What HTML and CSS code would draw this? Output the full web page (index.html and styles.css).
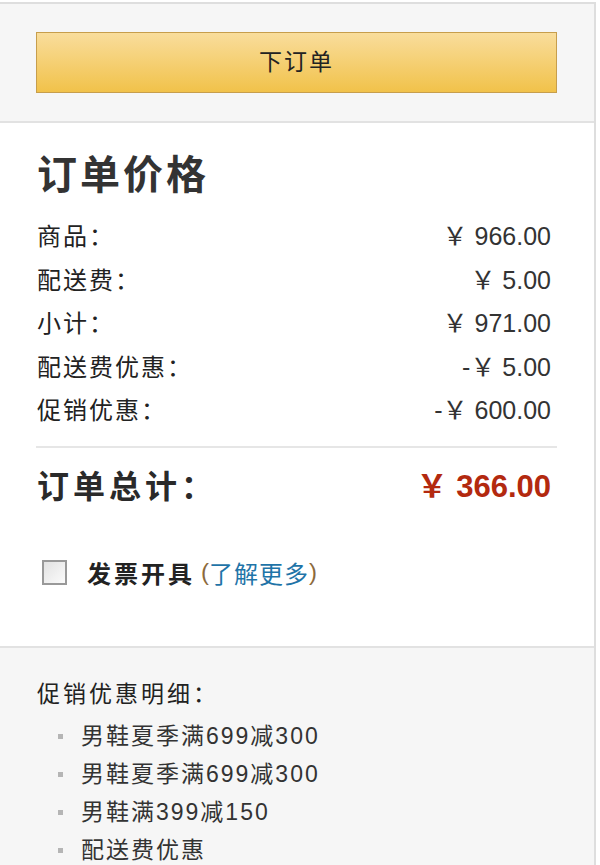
FILE: index.html
```html
<!DOCTYPE html>
<html lang="zh-CN">
<head>
<meta charset="utf-8">
<title>订单价格</title>
<link rel="stylesheet" href="styles.css">
</head>
<body>
<div class="checkout">
    <div class="submit_box">
        <a class="btn_order" href="javascript:;">下订单</a>
    </div>

    <div class="price_box">
        <h2 class="title">订单价格</h2>
        <ul class="price_list">
            <li><span class="label">商品：</span><span class="num">￥ 966.00</span></li>
            <li><span class="label">配送费：</span><span class="num">￥ 5.00</span></li>
            <li><span class="label">小计：</span><span class="num">￥ 971.00</span></li>
            <li><span class="label">配送费优惠：</span><span class="num">-￥ 5.00</span></li>
            <li><span class="label">促销优惠：</span><span class="num">-￥ 600.00</span></li>
        </ul>
        <div class="total">
            <span class="label">订单总计：</span>
            <span class="num">￥ 366.00</span>
        </div>
        <label class="invoice">
            <input type="checkbox">
            <span class="chk"></span>
            <b>发票开具</b><span class="paren open">(</span><a href="javascript:;">了解更多</a><span class="paren">)</span>
        </label>
    </div>

    <div class="promo_box">
        <p class="promo_title">促销优惠明细：</p>
        <ul class="promo_list">
            <li>男鞋夏季满699减300</li>
            <li>男鞋夏季满699减300</li>
            <li>男鞋满399减150</li>
            <li>配送费优惠</li>
        </ul>
    </div>
</div>
</body>
</html>
```

FILE: styles.css
```css
body { margin: 0; background: #fff; font-family: "Liberation Sans", "Noto Sans CJK SC", sans-serif; color: #222; }
ul { padding: 0; margin: 0; } li { list-style: none; } a { text-decoration: none; }

.checkout { width: 594px; margin-top: 2px; border-top: 2px solid #dedede; border-right: 2px solid #dedede; }

/* 下单按钮区 */
.submit_box { background: #f6f6f6; padding: 28px 37px 28px 36px; border-bottom: 2px solid #e2e2e2; }
.btn_order { display: block; height: 59px; line-height: 59px; text-align: center; font-size: 23px; letter-spacing: 2px; color: #222; border: 1px solid #c79e4c; background: linear-gradient(#f9dd9c, #f1c24a); }

/* 价格明细 */
.price_box { padding: 28px 43px 56px 37px; border-bottom: 2px solid #e2e2e2; }
.title { margin: 0 0 16px; font-size: 40px; line-height: 48px; font-weight: 700; letter-spacing: 3px; color: #333; }
.price_list li { display: flex; justify-content: space-between; height: 43.5px; line-height: 43.5px; font-size: 24px; }
.price_list .label { letter-spacing: 2px; }
.num { font-size: 25px; color: #333; }

.total { display: flex; justify-content: space-between; margin: 13px -6px 0 -1px; padding: 0 6px 0 1px; border-top: 2px solid #e6e6e6; height: 78px; line-height: 78px; }
.total .label { font-size: 32px; font-weight: 700; letter-spacing: 4px; color: #2a2a2a; }
.total .num { font-size: 31px; font-weight: 700; color: #b3290f; }

.invoice { display: flex; align-items: center; margin: 29px 0 0 5px; font-size: 24px; cursor: pointer; }
.invoice input { display: none; }
.chk { width: 21px; height: 21px; border: 2px solid #999; background: linear-gradient(135deg, #e2e2e2, #fbfbfb); margin-right: 20px; }
.invoice b { letter-spacing: 3px; color: #222; }
.invoice .paren { color: #8c6a3c; }
.invoice .open { margin-left: 6px; }
.invoice a { color: #1f74a8; letter-spacing: 1px; }

/* 促销明细 */
.promo_box { background: #f6f6f6; padding: 28px 37px 10px; }
.promo_title { margin: 0 0 5px; font-size: 23px; line-height: 36px; letter-spacing: 3px; }
.promo_list li { position: relative; padding-left: 44px; font-size: 23px; line-height: 38px; letter-spacing: 2px; color: #333; }
.promo_list li:before { content: ""; position: absolute; left: 21px; top: 17px; width: 5px; height: 5px; background: #b5b5b5; }
```
